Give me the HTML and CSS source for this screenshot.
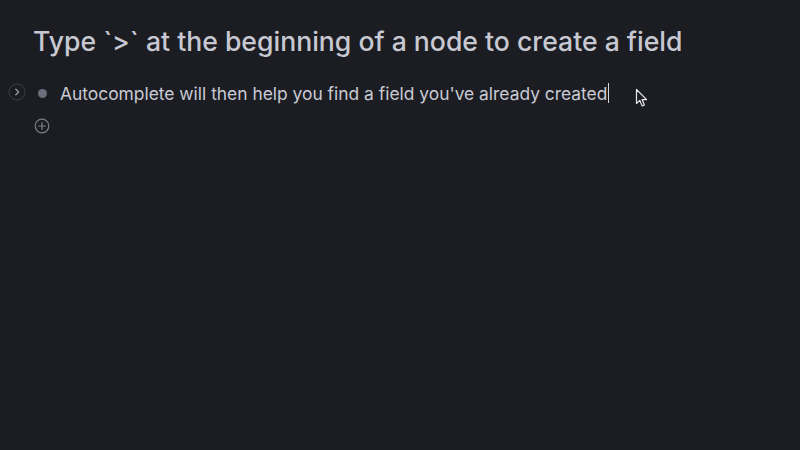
FILE: index.html
```html
<!DOCTYPE html>
<html>
<head>
<meta charset="utf-8">
<link rel="stylesheet" href="styles.css">
</head>
<body>
<div class="page">
  <h1 class="title">Type `&gt;` at the beginning of a node to create a field</h1>
  <div class="node">
    <span class="expander">
      <svg width="18" height="18" viewBox="0 0 18 18"><circle cx="9" cy="9" r="8" fill="none" stroke="#3a3d47" stroke-width="1"/><path d="M7.8 6.2 L10.6 9 L7.8 11.8" fill="none" stroke="#9a9dab" stroke-width="1.3" stroke-linecap="round" stroke-linejoin="round"/></svg>
    </span>
    <span class="bullet"></span>
    <span class="text">Autocomplete will then help you find a field you've already created<span class="caret"></span></span>
    <svg class="pointer" width="14" height="20" viewBox="0 0 14 20"><path d="M1.5 1.5 L1.5 15.5 L4.8 12.4 L7.2 18 L9.4 17 L7.1 11.6 L11.6 11.6 Z" fill="#1b1d23" stroke="#e8e8ec" stroke-width="1.2" stroke-linejoin="round"/></svg>
  </div>
  <div class="add">
    <svg width="16" height="16" viewBox="0 0 16 16"><circle cx="8" cy="8" r="6.8" fill="none" stroke="#7d808c" stroke-width="1.2"/><path d="M8 4.6 V11.4 M4.6 8 H11.4" stroke="#7d808c" stroke-width="1.2" stroke-linecap="round"/></svg>
  </div>
</div>
</body>
</html>
```
FILE: styles.css
```css
html, body {
  margin: 0;
  padding: 0;
  background: #1b1d23;
  width: 800px;
  height: 450px;
  overflow: hidden;
  font-family: Inter, "Noto Sans", sans-serif;
}
.page {
  padding: 23px 0 0 8px;
}
.title {
  margin: 0 0 0 25px;
  font-size: 26.6px;
  font-weight: 500;
  line-height: 36px;
  color: #c7c8d1;
  letter-spacing: 0;
}
.node {
  display: flex;
  align-items: center;
  height: 26px;
  margin-top: 21px;
  position: relative;
}
.expander {
  width: 18px;
  height: 18px;
  display: flex;
  margin-top: -2px;
}
.bullet {
  width: 9px;
  height: 9px;
  border-radius: 50%;
  background: #6c6f7c;
  margin-left: 12px;
}
.text {
  margin-left: 13px;
  font-size: 17.4px;
  color: #c9cad3;
  display: flex;
  align-items: center;
}
.caret {
  display: inline-block;
  width: 1px;
  height: 20px;
  background: #d8d9e0;
  margin-left: 1px;
}
.pointer {
  position: absolute;
  left: 627px;
  top: 8px;
}
.add {
  margin: 12px 0 0 26px;
  display: flex;
}
```
